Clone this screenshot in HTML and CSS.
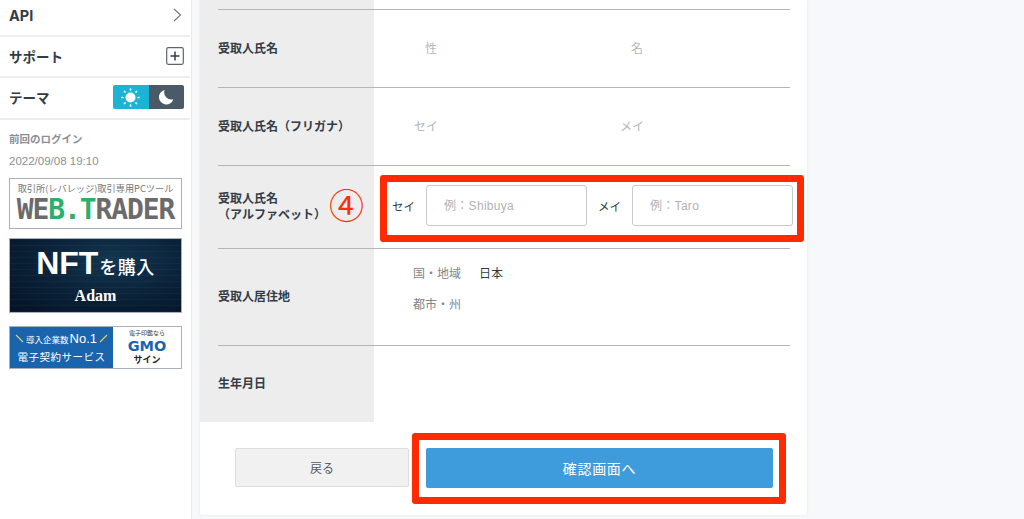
FILE: index.html
```html
<!DOCTYPE html>
<html lang="ja">
<head>
	<meta charset="utf-8">
	<title>受取人情報</title>
	<link rel="stylesheet" href="styles.css">
</head>
<body>
	<div class="page">
		<div class="side">
			<div class="side-row row-api">
				<span class="api-text">API</span>
				<svg class="arrow" width="9" height="14" viewBox="0 0 9 14"><path d="M1 1l6.500 6L1 13" fill="none" stroke="#71787f" stroke-width="1.200"/></svg>
			</div>
			<div class="side-row row-support">
				<span>サポート</span>
				<svg class="plus" width="18" height="18" viewBox="0 0 18 18"><rect x="0.700" y="0.700" width="16.600" height="16.600" rx="1.500" fill="#fff" stroke="#5d6670" stroke-width="1.200"/><path d="M4.500 9h9M9 4.500v9" stroke="#333c46" stroke-width="1.500"/></svg>
			</div>
			<div class="side-row row-theme">
				<span>テーマ</span>
				<div class="theme-switch">
					<div class="theme-light">
						<svg width="19" height="19" viewBox="0 0 19 19">
							<circle cx="9.500" cy="9.500" r="5" fill="#fff"/>
							<path d="M9.500 1v.8M9.500 17.200v.8M1 9.500h.8M17.200 9.500h.8M3.500 3.500l.5.5M15 15l.5.5M3.500 15.500l.5-.5M15 4l.5-.5" stroke="#fff" stroke-width="1.700" stroke-linecap="round"/>
						</svg>
					</div>
					<div class="theme-dark">
						<svg width="16" height="16" viewBox="0 0 18 18"><path d="M7.500 1a8.300 8.300 0 1 0 9.800 10.500A8 8 0 0 1 7.500 1z" fill="#fff"/></svg>
					</div>
				</div>
			</div>
			<div class="last-login">
				<p class="login-title">前回のログイン</p>
				<p class="login-date">2022/09/08 19:10</p>
			</div>
			<div class="banner bn-web">
				<p class="web-sub">取引所(レバレッジ)取引専用PCツール</p>
				<p class="web-logo">WE<em>B.T</em>RADER</p>
			</div>
			<div class="banner bn-nft">
				<p class="nft-title">NFT<small>を購入</small></p>
				<p class="nft-adam">Adam</p>
			</div>
			<div class="banner bn-gmo">
				<div class="gmo-left">
					<p class="gmo-top">
						<svg width="9" height="9" viewBox="0 0 9 9"><path d="M1 1l7 7" stroke="#e8c84a" stroke-width="1.200"/></svg>
						導入企業数<b>No.1</b>
						<svg width="9" height="9" viewBox="0 0 9 9"><path d="M8 1L1 8" stroke="#e8c84a" stroke-width="1.200"/></svg>
					</p>
					<p class="gmo-main">電子契約サービス</p>
				</div>
				<div class="gmo-right">
					<p class="gmo-small">電子印鑑なら</p>
					<p class="gmo-logo">GMO</p>
					<p class="gmo-sign">サイン</p>
				</div>
			</div>
		</div>

		<div class="main">
			<div class="card">
				<div class="form">
					<div class="row row-a">
						<div class="label">受取人氏名</div>
						<div class="value names">
							<span class="hint name-first">性</span>
							<span class="hint">名</span>
						</div>
					</div>
					<div class="row row-a">
						<div class="label">受取人氏名（フリガナ）</div>
						<div class="value kana">
							<span class="hint kana-first">セイ</span>
							<span class="hint">メイ</span>
						</div>
					</div>
					<div class="row row-b">
						<div class="label">受取人氏名<br>（アルファベット）</div>
						<div class="value alpha">
							<span class="alpha-label">セイ</span>
							<input class="text-input" placeholder="例：Shibuya">
							<span class="alpha-label">メイ</span>
							<input class="text-input" placeholder="例：Taro">
						</div>
					</div>
					<div class="row row-c">
						<div class="label">受取人居住地</div>
						<div class="value address">
							<p><span class="addr-key">国・地域</span><span class="addr-val">日本</span></p>
							<p><span class="addr-key">都市・州</span></p>
						</div>
					</div>
					<div class="row row-d">
						<div class="label">生年月日</div>
						<div class="value"></div>
					</div>
				</div>
				<div class="buttons">
					<button class="btn btn-back">戻る</button>
					<button class="btn btn-next">確認画面へ</button>
				</div>
				<div class="step">④</div>
				<div class="mark mark-input"></div>
				<div class="mark mark-button"></div>
			</div>
		</div>
	</div>
</body>
</html>
```

FILE: styles.css
```css
*{
	box-sizing: border-box;
}
html,body{
	height: 100%;
}
body{
	margin: 0;
	overflow: hidden;
	background-color: #f7f8fb;
	color: #333c46;
	font-family: "Noto Sans CJK JP", "Liberation Sans", sans-serif;
}
p{
	margin: 0;
}
.page{
	display: flex;
	height: 519px;
}

/* side menu */
.side{
	flex: none;
	width: 192px;
	height: 100%;
	padding-right: 1px;
	background-color: #fff;
	border-right: 1px solid #e9eaec;
}
.side-row{
	display: flex;
	align-items: center;
	justify-content: space-between;
	padding: 0 6px 0 9px;
	border-bottom: 2px solid #eeeeef;
	font-size: 13.500px;
	font-weight: 700;
}
.api-text{
	font-family: "Inter", sans-serif;
	font-size: 14.500px;
}
.row-api{
	height: 37px;
	padding-right: 8px;
	padding-bottom: 5px;
}
.row-support{
	height: 41px;
	padding-bottom: 1px;
}
.row-theme{
	height: 42px;
	padding-bottom: 2px;
}
.theme-switch{
	display: flex;
	width: 71px;
	height: 24px;
	border-radius: 2px;
	overflow: hidden;
}
.theme-light,.theme-dark{
	display: flex;
	align-items: center;
	justify-content: center;
	width: 50%;
}
.theme-light{
	background-color: #1cb4d4;
}
.theme-dark{
	background-color: #4a5a68;
}
.last-login{
	padding: 11px 9px 0;
	height: 58px;
	color: #8a8f95;
}
.login-title{
	font-size: 10.500px;
	font-weight: 700;
	line-height: 16px;
}
.login-date{
	margin-top: 6px;
	font-family: "Liberation Sans", sans-serif;
	font-size: 11.500px;
	line-height: 16px;
}
.banner{
	width: 173px;
	margin-left: 9px;
	overflow: hidden;
	border: 1px solid #a7b1bb;
}
.bn-web{
	height: 51px;
	padding-top: 2px;
	text-align: center;
	background-color: #fff;
}
.web-sub{
	font-size: 9.200px;
	line-height: 14px;
	color: #777;
	white-space: nowrap;
}
.web-logo{
	font-family: "DejaVu Sans Mono", monospace;
	font-size: 28px;
	font-weight: 700;
	line-height: 29px;
	letter-spacing: -1.100px;
	color: #6b6b6b;
	white-space: nowrap;
}
.web-logo em{
	font-style: normal;
	color: #2eae6b;
}
.bn-nft{
	height: 75px;
	margin-top: 9px;
	padding-top: 4px;
	text-align: center;
	color: #fff;
	background:
		repeating-linear-gradient(to bottom, rgba(90, 170, 200, 0.060) 0, rgba(90, 170, 200, 0.060) 1px, transparent 1px, transparent 6px),
		radial-gradient(ellipse at 60% 30%, #123650 0, #0a2036 55%, #051224 100%);
}
.nft-title{
	font-family: "Liberation Sans", sans-serif;
	font-size: 32px;
	font-weight: 700;
	line-height: 40px;
	white-space: nowrap;
}
.nft-title small{
	margin-left: 1px;
	font-family: "Noto Sans CJK JP", sans-serif;
	font-size: 18px;
	font-weight: 500;
	letter-spacing: 0.500px;
}
.nft-adam{
	margin-top: 0;
	font-family: "Liberation Serif", serif;
	font-size: 16px;
	font-weight: 700;
	line-height: 20px;
}
.bn-gmo{
	display: flex;
	height: 43px;
	margin-top: 13px;
}
.gmo-left{
	width: 103px;
	padding-top: 3px;
	text-align: center;
	color: #fff;
	background-color: #1a64ae;
	white-space: nowrap;
}
.gmo-top{
	font-size: 8.500px;
	line-height: 18px;
}
.gmo-top b{
	margin-left: 1px;
	font-family: "Liberation Sans", sans-serif;
	font-size: 13px;
	font-weight: 400;
}
.gmo-main{
	font-size: 10.500px;
	line-height: 17px;
	letter-spacing: 0.500px;
}
.gmo-right{
	flex: 1;
	padding-top: 1px;
	text-align: center;
	background-color: #fff;
	white-space: nowrap;
}
.gmo-small{
	font-size: 6px;
	line-height: 10px;
	color: #333;
}
.gmo-logo{
	font-family: "DejaVu Sans", sans-serif;
	font-size: 14.500px;
	font-weight: 700;
	line-height: 16px;
	color: #1a64ae;
}
.gmo-sign{
	font-size: 9px;
	font-weight: 700;
	line-height: 12px;
	color: #222;
}

/* form card */
.main{
	flex: 1;
	padding-left: 8px;
}
.card{
	position: relative;
	width: 607px;
	height: 515px;
	background-color: #fff;
	border-radius: 0 0 3px 3px;
	box-shadow: 0 0 3px rgba(0, 0, 0, 0.080);
}
.form{
	height: 422px;
	padding: 9px 17px 0 18px;
	background: linear-gradient(to right, #ededee 174px, #fff 174px);
}
.row{
	display: flex;
	align-items: center;
	padding-bottom: 2px;
	border-top: 1px solid #b4b5b6;
}
.row-a{
	height: 78px;
}
.row-b{
	height: 83px;
	padding-bottom: 3px;
}
.row-c{
	height: 97px;
}
.row-d{
	height: 77px;
}
.label{
	flex: none;
	width: 156px;
	font-size: 12px;
	font-weight: 700;
	line-height: 16px;
	white-space: nowrap;
}
.value{
	flex: 1;
	font-size: 12px;
}
.names,.kana{
	display: flex;
}
.hint{
	color: #b5b7ba;
}
.name-first{
	margin-left: 51px;
	margin-right: 194px;
}
.kana-first{
	margin-left: 40px;
	margin-right: 182px;
}
.alpha{
	display: flex;
	align-items: center;
	margin-left: 18px;
	margin-right: -3px;
}
.alpha-label{
	width: 34px;
	flex: none;
	font-size: 11.500px;
}
.alpha .alpha-label + .text-input + .alpha-label{
	margin-left: 11px;
}
.text-input{
	width: 161px;
	height: 41px;
	padding: 0 17px;
	background-color: #fff;
	border: 1px solid #c9cacb;
	border-radius: 3px;
	outline: none;
	font-family: "Liberation Sans", "Noto Sans CJK JP", sans-serif;
	font-size: 12px;
	letter-spacing: 0.300px;
}
.text-input::placeholder{
	color: #b0b2b5;
}
.address{
	margin-left: 39px;
	margin-top: -15px;
}
.address p{
	line-height: 18px;
	margin-bottom: 13px;
}
.address p:last-child{
	margin-bottom: 0;
}
.addr-key{
	color: #80858b;
}
.addr-val{
	margin-left: 18px;
}
.buttons{
	display: flex;
	align-items: flex-start;
	gap: 17px;
	padding: 26px 0 0 35px;
}
.btn{
	height: 39px;
	padding: 0;
	border-radius: 2px;
	font-family: "Noto Sans CJK JP", sans-serif;
	font-size: 12px;
}
.btn-back{
	width: 174px;
	background-color: #f1f1f2;
	border: 1px solid #dcdcdd;
	color: #555b62;
}
.btn-next{
	width: 347px;
	height: 40px;
	background-color: #3e9bdc;
	border: none;
	color: #fff;
	font-size: 14px;
	letter-spacing: 0.700px;
}

/* red annotations over the form */
.step{
	position: absolute;
	left: 129px;
	top: 181px;
	font-size: 35px;
	line-height: 46px;
	color: #ff3000;
}
.mark{
	position: absolute;
	border: 7px solid #ff2a00;
	border-radius: 3px;
}
.mark-input{
	left: 180px;
	top: 175px;
	width: 424px;
	height: 67px;
}
.mark-button{
	left: 212px;
	top: 433px;
	width: 374px;
	height: 71px;
}
```
